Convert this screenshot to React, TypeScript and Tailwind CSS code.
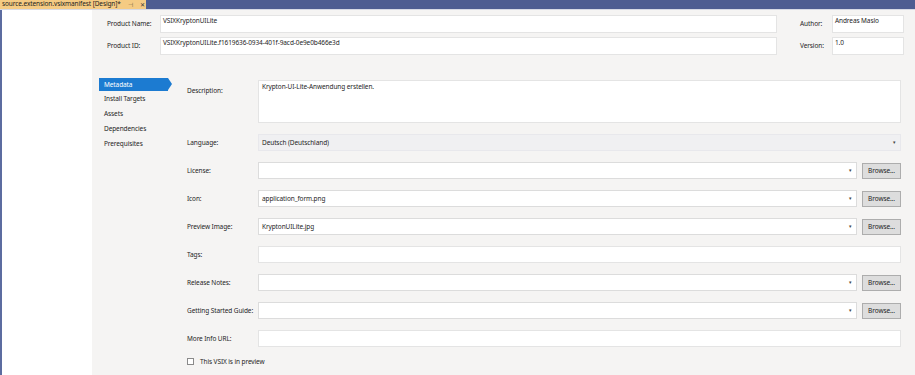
import React from "react";

const font = { fontFamily: '"Noto Sans", "Open Sans", "Liberation Sans", sans-serif' };

function Dropdown({ value, gray }: { value?: string; gray?: boolean }) {
  return (
    <div
      className={`flex-1 h-[17px] flex items-center justify-between px-[3px] border ${
        gray ? "bg-[#f0f0f2] border-[#e8e8ec]" : "bg-white border-[#dcdcdc]"
      }`}
    >
      <span className="text-[6.5px] text-[#1e1e1e]">{value}</span>
      <span className="text-[5px] text-[#444] pr-[1px]">▾</span>
    </div>
  );
}

function BrowseRow({ label, value }: { label: string; value?: string }) {
  return (
    <div className="flex items-center h-[17px]">
      <div className="w-[71px] shrink-0 text-[6.5px] text-[#1e1e1e] whitespace-nowrap">{label}</div>
      <Dropdown value={value} />
      <button className="ml-[5px] w-[39px] h-[16px] bg-[#dddddd] border border-[#adadad] text-[6.5px] text-[#1e1e1e]">
        Browse...
      </button>
    </div>
  );
}

function TextRow({ label }: { label: string }) {
  return (
    <div className="flex items-center h-[17px]">
      <div className="w-[71px] shrink-0 text-[6.5px] text-[#1e1e1e] whitespace-nowrap">{label}</div>
      <div className="flex-1 h-[17px] bg-white border border-[#e4e4e4]" />
    </div>
  );
}

export default function App() {
  const navItems = ["Install Targets", "Assets", "Dependencies", "Prerequisites"];

  return (
    <div
      className="w-[915px] h-[375px] flex flex-col bg-white overflow-hidden tracking-[-0.1px]"
      style={font}
    >
      {/* Tab strip */}
      <div className="h-[10px] bg-[#4e5d91] flex border-b border-[#d6d9e4]">
        <div className="w-[146px] h-[9px] bg-[#f5cb83] flex items-center pl-[2px] gap-[7px]">
          <span className="text-[6.5px] leading-none text-[#1e1e1e] whitespace-nowrap">
            source.extension.vsixmanifest [Design]*
          </span>
          <span className="text-[6px] leading-none text-[#6b5a3a]">⊣</span>
          <span className="text-[6px] leading-none text-[#3a3a3a]">✕</span>
        </div>
      </div>

      <div className="flex flex-1">
        <div className="w-[2px] bg-[#5c6ca0]" />
        <div className="w-[90px] bg-white" />

        <div className="flex-1 bg-[#f5f4f3] flex flex-col">
          {/* Header fields */}
          <div className="flex pt-[5px] pl-[15px] pr-[10px]">
            <div className="flex flex-col gap-[4px]">
              <div className="flex items-center h-[18px]">
                <div className="w-[53px] text-[6.5px] text-[#1e1e1e]">Product Name:</div>
                <div className="w-[617px] h-[18px] bg-white border border-[#e4e4e4] px-[2px] text-[6.5px] text-[#1e1e1e]">
                  VSIXKryptonUILite
                </div>
              </div>
              <div className="flex items-center h-[18px]">
                <div className="w-[53px] text-[6.5px] text-[#1e1e1e]">Product ID:</div>
                <div className="w-[617px] h-[18px] bg-white border border-[#e4e4e4] px-[2px] text-[6.5px] text-[#1e1e1e]">
                  VSIXKryptonUILite.f1619636-0934-401f-9acd-0e9e0b466e3d
                </div>
              </div>
            </div>
            <div className="flex flex-col gap-[4px] ml-[23px]">
              <div className="flex items-center h-[18px]">
                <div className="w-[32px] text-[6.5px] text-[#1e1e1e]">Author:</div>
                <div className="w-[72px] h-[18px] bg-white border border-[#e4e4e4] px-[2px] text-[6.5px] text-[#1e1e1e]">
                  Andreas Maslo
                </div>
              </div>
              <div className="flex items-center h-[18px]">
                <div className="w-[32px] text-[6.5px] text-[#1e1e1e]">Version:</div>
                <div className="w-[72px] h-[18px] bg-white border border-[#e4e4e4] px-[2px] text-[6.5px] text-[#1e1e1e]">
                  1.0
                </div>
              </div>
            </div>
          </div>

          {/* Body */}
          <div className="flex pt-[22px] pl-[7px] pr-[14px]">
            {/* Nav */}
            <div className="w-[88px] flex flex-col pt-[1px]">
              <div className="relative w-[69px] h-[13px] bg-[#1c7bd1] flex items-center pl-[5px]">
                <span className="text-[6.5px] text-white">Metadata</span>
                <div className="absolute right-[-4px] top-0 w-0 h-0 border-y-[6.5px] border-y-transparent border-l-[4px] border-l-[#1c7bd1]" />
              </div>
              {navItems.map((item) => (
                <div key={item} className="h-[15px] flex items-center pl-[5px] text-[6.5px] text-[#1e1e1e]">
                  {item}
                </div>
              ))}
            </div>

            {/* Form */}
            <div className="flex-1 flex flex-col gap-[11px] pt-[3px]">
              <div className="flex">
                <div className="w-[71px] pt-[6px] text-[6.5px] text-[#1e1e1e]">Description:</div>
                <div className="flex-1 h-[43px] bg-white border border-[#e4e4e4] px-[3px] pt-[1px] text-[6.5px] text-[#1e1e1e]">
                  Krypton-UI-Lite-Anwendung erstellen.
                </div>
              </div>
              <div className="flex items-center h-[17px]">
                <div className="w-[71px] shrink-0 text-[6.5px] text-[#1e1e1e]">Language:</div>
                <Dropdown value="Deutsch (Deutschland)" gray />
              </div>
              <BrowseRow label="License:" />
              <BrowseRow label="Icon:" value="application_form.png" />
              <BrowseRow label="Preview Image:" value="KryptonUILite.jpg" />
              <TextRow label="Tags:" />
              <BrowseRow label="Release Notes:" />
              <BrowseRow label="Getting Started Guide:" />
              <TextRow label="More Info URL:" />
              <div className="flex items-center gap-[6px] -mt-[1px]">
                <div className="w-[7px] h-[7px] bg-white border border-[#8a8a8a]" />
                <span className="text-[6.5px] text-[#1e1e1e]">This VSIX is in preview</span>
              </div>
            </div>
          </div>
        </div>
      </div>
    </div>
  );
}
